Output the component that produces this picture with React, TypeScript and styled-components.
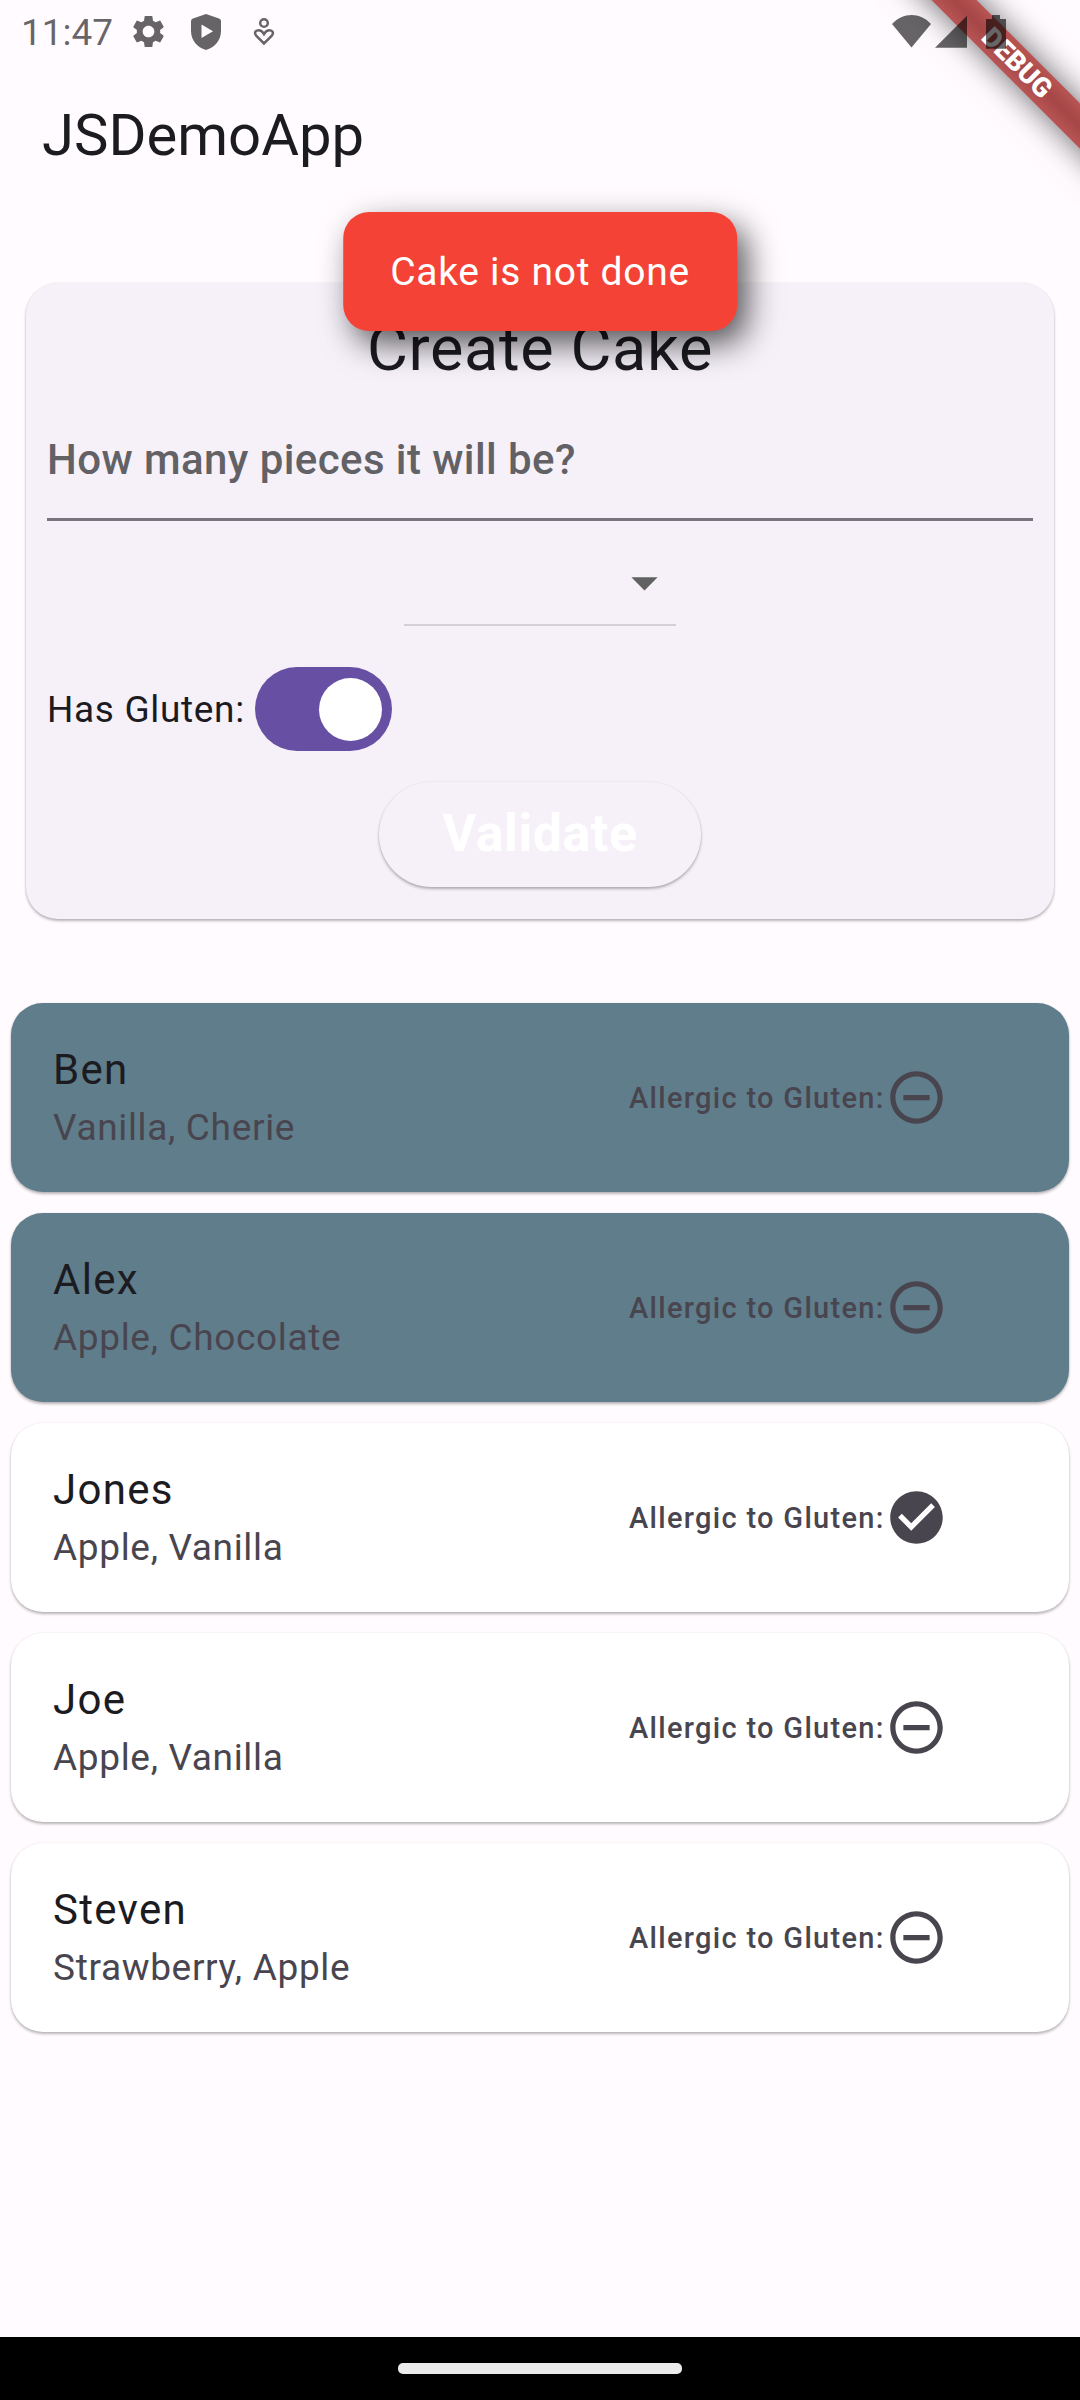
import React, { useState } from "react";
import styled, { createGlobalStyle } from "styled-components";
import { MdSettings, MdCheckCircle, MdRemoveCircleOutline, MdArrowDropDown } from "react-icons/md";

const color = {
  surface: "#fffbff",
  card: "#f6f1f9",
  text: "#1c1b1f",
  muted: "#49454f",
  hint: "#626166",
  outline: "#79747e",
  primary: "#6750a4",
  error: "#f44336",
  blueGrey: "#607d8b",
  system: "rgba(0, 0, 0, 0.6)",
};

// Material type scale tracking
const tracking = {
  title: "0.01em",
  body: "0.018em",
  bodyLarge: "0.031em",
  label: "0.045em",
};

const cardShadow = "0 2px 3px rgba(0, 0, 0, 0.28), 0 0 2px rgba(0, 0, 0, 0.08)";

const GlobalStyle = createGlobalStyle`
  *, *::before, *::after { box-sizing: border-box; }
  body {
    margin: 0;
    background: ${color.surface};
    color: ${color.text};
    font-family: Roboto, "Noto Sans", sans-serif;
  }
  button, input, select { font: inherit; }
`;

const Screen = styled.div`
  position: relative;
  display: flex;
  flex-direction: column;
  min-height: 100vh;
  overflow: hidden;
`;

const StatusBar = styled.div`
  position: relative;
  z-index: 3;
  display: flex;
  align-items: center;
  justify-content: space-between;
  height: 63px;
  padding: 0 74px 0 21px;
  color: ${color.system};
`;

const StatusGroup = styled.div<{ $gap: number }>`
  display: flex;
  align-items: center;
  gap: ${(p) => p.$gap}px;
`;

const Clock = styled.time`
  padding-top: 2px;
  font-size: 37px;
  line-height: 42px;
`;

const AppBar = styled.header`
  display: flex;
  align-items: center;
  height: 147px;
  padding: 0 42px 4px;
`;

const AppTitle = styled.h1`
  margin: 0;
  font-size: 58px;
  line-height: 74px;
  font-weight: 400;
`;

const BannerCorner = styled.div`
  position: absolute;
  z-index: 2;
  top: 0;
  right: 0;
  width: 210px;
  height: 210px;
  overflow: hidden;
  pointer-events: none;
`;

const Banner = styled.div`
  position: absolute;
  top: 47px;
  right: -87px;
  width: 300px;
  height: 32px;
  transform: rotate(45deg);
  background: linear-gradient(#b85454, #a64646, #b85454);
  box-shadow: 0 0 32px rgba(0, 0, 0, 0.6);
  color: #fff;
  font-size: 27px;
  line-height: 32px;
  font-weight: 900;
  text-align: center;
`;

const Toast = styled.div`
  position: absolute;
  z-index: 1;
  top: 212px;
  left: 50%;
  transform: translateX(-50%);
  padding: 33px 47px 31px;
  border-radius: 26px;
  background: ${color.error};
  box-shadow: 10px 13px 32px rgba(0, 0, 0, 0.65);
  color: #fff;
  font-size: 39px;
  line-height: 55px;
  letter-spacing: ${tracking.body};
  white-space: nowrap;
`;

const Main = styled.main`
  flex: 1;
  display: flex;
  flex-direction: column;
  gap: 84px;
  padding-top: 73px;
`;

const FormCard = styled.form`
  display: flex;
  flex-direction: column;
  margin: 0 26px;
  padding: 21px;
  border-radius: 32px;
  background: ${color.card};
  box-shadow: ${cardShadow};
`;

const FormTitle = styled.h2`
  margin: 0;
  font-size: 63px;
  line-height: 90px;
  font-weight: 400;
  letter-spacing: ${tracking.title};
  text-align: center;
`;

const PiecesInput = styled.input`
  width: 100%;
  height: 127px;
  padding: 6px 0 0;
  border: 0;
  border-bottom: 3px solid ${color.outline};
  border-radius: 0;
  outline: 0;
  background: transparent;
  color: ${color.text};
  font-size: 42px;
  font-weight: 500;
  letter-spacing: ${tracking.title};

  &::placeholder {
    color: ${color.hint};
    opacity: 1;
  }
`;

const SelectBox = styled.div`
  align-self: center;
  display: grid;
  align-items: center;
  width: 272px;
  height: 105px;
  margin-bottom: 20px;
  border-bottom: 2px solid #d3cfd6;

  > * { grid-area: 1 / 1; }
  > svg {
    justify-self: end;
    margin-top: 19px;
    color: #616161;
    pointer-events: none;
  }
`;

const FlavourSelect = styled.select`
  width: 100%;
  height: 100%;
  padding: 0;
  border: 0;
  outline: 0;
  appearance: none;
  background: transparent;
  color: ${color.text};
  font-size: 42px;
`;

const SwitchRow = styled.label`
  align-self: flex-start;
  display: flex;
  align-items: center;
  gap: 10px;
  height: 126px;
  font-size: 37px;
  line-height: 53px;
  letter-spacing: ${tracking.body};
`;

const Switch = styled.input`
  appearance: none;
  display: flex;
  align-items: center;
  width: 137px;
  height: 84px;
  margin: 0;
  padding: 0 10px;
  border-radius: 42px;
  background: #cac4d0;

  &::before {
    content: "";
    width: 63px;
    height: 63px;
    border-radius: 50%;
    background: #fff;
  }

  &:checked {
    justify-content: flex-end;
    background: ${color.primary};
  }
`;

const ValidateButton = styled.button`
  align-self: center;
  height: 105px;
  margin: 10px 0 11px;
  padding: 0 63px 2px;
  border: 0;
  border-radius: 53px;
  background: ${color.card};
  box-shadow: ${cardShadow};
  color: #fff;
  font-size: 52px;
  line-height: 74px;
  font-weight: 700;
  letter-spacing: ${tracking.title};
`;

const PeopleList = styled.ul`
  display: flex;
  flex-direction: column;
  gap: 21px;
  margin: 0;
  padding: 0 11px;
  list-style: none;
`;

const PersonCard = styled.li<{ $selected: boolean }>`
  display: grid;
  grid-template-columns: 1fr 377px;
  align-items: center;
  height: 189px;
  padding: 0 63px 0 42px;
  border-radius: 32px;
  background: ${(p) => (p.$selected ? color.blueGrey : "#fff")};
  box-shadow: ${cardShadow};
`;

const Person = styled.div`
  padding-bottom: 4px;
`;

const PersonName = styled.div`
  font-size: 42px;
  line-height: 63px;
  letter-spacing: ${tracking.bodyLarge};
`;

const PersonFlavours = styled.div`
  color: ${color.muted};
  font-size: 37px;
  line-height: 53px;
  letter-spacing: ${tracking.body};
`;

const Allergy = styled.div`
  display: flex;
  align-items: center;
  color: ${color.muted};
  font-size: 29px;
  line-height: 42px;
  font-weight: 500;
  letter-spacing: ${tracking.label};
  white-space: nowrap;

  svg { flex: none; }
`;

const NavBar = styled.footer`
  display: flex;
  align-items: center;
  justify-content: center;
  height: 63px;
  background: #000;
`;

const NavHandle = styled.div`
  width: 284px;
  height: 11px;
  border-radius: 5px;
  background: #ebebeb;
`;

const ShieldIcon = () => (
  <svg width="30" height="36" viewBox="0 0 30 36" fill="currentColor" aria-hidden="true">
    <path
      fillRule="evenodd"
      d="M15 0 28 4.500Q30 5.200 30 7V17C30 26 24 33.500 15 36 6 33.500 0 26 0 17V7Q0 5.200 2 4.500ZM10.500 10.500V24L22 17.200Z"
    />
  </svg>
);

const CareIcon = () => (
  <svg width="40" height="30" viewBox="-9 0 40 30" fill="none" stroke="currentColor" strokeWidth="2.500" aria-hidden="true">
    <circle cx="11" cy="6" r="3.800" />
    <path d="M11 26.500 3.400 19C0.800 16 2.300 13.200 5.500 13.200 8 13.200 9.500 14.500 11 17 12.500 14.500 14 13.200 16.500 13.200 19.700 13.200 21.200 16 18.600 19Z" />
  </svg>
);

const SignalIcons = () => (
  <svg width="114" height="34" viewBox="0 0 114 34" fill="currentColor" aria-hidden="true">
    <path d="M0 9C11-3 28-3 39 9L19.500 32.500Z" />
    <path d="M43 32.700H75V.7Z" />
    <path d="M100 0h8v4h6v29.700H94V4h6Z" />
  </svg>
);

const people = [
  { name: "Ben", flavours: "Vanilla, Cherie", allergic: false, selected: true },
  { name: "Alex", flavours: "Apple, Chocolate", allergic: false, selected: true },
  { name: "Jones", flavours: "Apple, Vanilla", allergic: true, selected: false },
  { name: "Joe", flavours: "Apple, Vanilla", allergic: false, selected: false },
  { name: "Steven", flavours: "Strawberry, Apple", allergic: false, selected: false },
];

export default function App() {
  const [hasGluten, setHasGluten] = useState(true);

  return (
    <>
      <GlobalStyle />
      <Screen>
        <StatusBar>
          <StatusGroup $gap={23}>
            <StatusGroup $gap={16}>
              <Clock>11:47</Clock>
              <MdSettings size={39} aria-hidden="true" />
            </StatusGroup>
            <ShieldIcon />
            <CareIcon />
          </StatusGroup>
          <SignalIcons />
        </StatusBar>
        <AppBar>
          <AppTitle>JSDemoApp</AppTitle>
        </AppBar>
        <BannerCorner>
          <Banner>DEBUG</Banner>
        </BannerCorner>
        <Toast role="status">Cake is not done</Toast>

        <Main>
          <FormCard onSubmit={(e) => e.preventDefault()}>
            <FormTitle>Create Cake</FormTitle>
            <PiecesInput type="text" inputMode="numeric" placeholder="How many pieces it will be?" aria-label="How many pieces it will be?" />
            <SelectBox>
              <FlavourSelect aria-label="Flavour" defaultValue="">
                <option value="" />
                <option>Apple</option>
                <option>Vanilla</option>
                <option>Cherie</option>
                <option>Chocolate</option>
                <option>Strawberry</option>
              </FlavourSelect>
              <MdArrowDropDown size={63} aria-hidden="true" />
            </SelectBox>
            <SwitchRow>
              Has Gluten:
              <Switch type="checkbox" role="switch" checked={hasGluten} onChange={(e) => setHasGluten(e.target.checked)} />
            </SwitchRow>
            <ValidateButton type="submit">Validate</ValidateButton>
          </FormCard>

          <PeopleList>
            {people.map((p) => (
              <PersonCard key={p.name} $selected={p.selected}>
                <Person>
                  <PersonName>{p.name}</PersonName>
                  <PersonFlavours>{p.flavours}</PersonFlavours>
                </Person>
                <Allergy>
                  Allergic to Gluten:
                  {p.allergic ? <MdCheckCircle size={63} aria-label="Yes" /> : <MdRemoveCircleOutline size={63} aria-label="No" />}
                </Allergy>
              </PersonCard>
            ))}
          </PeopleList>
        </Main>

        <NavBar>
          <NavHandle />
        </NavBar>
      </Screen>
    </>
  );
}
